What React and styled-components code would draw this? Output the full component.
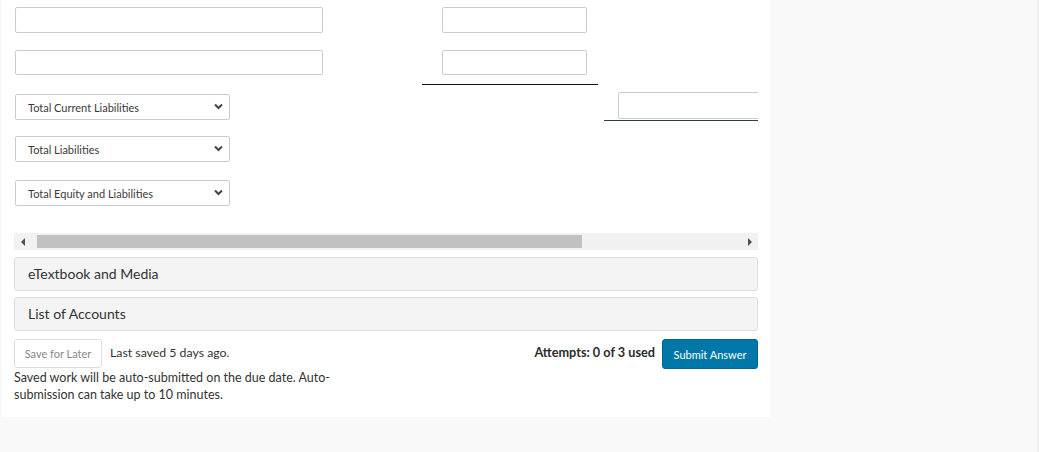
import React from "react";
import styled, { createGlobalStyle } from "styled-components";

const Global = createGlobalStyle`
  html, body { margin: 0; padding: 0; background: #f9f9f9; }
  body { font-family: Lato, "Open Sans", Arial, sans-serif; color: #333; }
  * { box-sizing: border-box; }
`;

const Page = styled.div`
  display: flex;
  width: 1039px;
  height: 452px;
  overflow: hidden;
`;

const Panel = styled.main`
  margin-left: 2px;
  width: 768px;
  height: 417px;
  background: #fff;
  padding: 0 12px 0 12px;
`;

const Spacer = styled.div`
  flex: 1;
`;

const EdgeStrip = styled.div`
  width: 2px;
  background: #efefef;
`;

const Clip = styled.div`
  width: 744px;
  overflow: hidden;
`;

const Row = styled.div`
  display: grid;
  grid-template-columns: 408px 182px 190px;
  height: ${(p) => p.$h}px;
  width: 780px;
`;

const Cell = styled.div`
  padding-top: ${(p) => p.$top || 0}px;
  padding-left: ${(p) => p.$left || 0}px;
`;

const RuledCell = styled.div`
  padding-top: ${(p) => p.$top || 0}px;
  padding-left: ${(p) => p.$left || 0}px;
  border-bottom: 1px solid ${(p) => p.$line};
  width: ${(p) => p.$w}px;
  height: ${(p) => p.$hh}px;
`;

const TextInput = styled.input`
  display: block;
  margin: 0 0 0 1px;
  width: ${(p) => p.$w}px;
  height: ${(p) => p.$h || 26}px;
  border: 1px solid #cccccc;
  border-radius: 2px;
  background: #fff;
  padding: 0 6px;
  font: 12px Lato, sans-serif;
  outline: none;
`;

const SelectWrap = styled.div`
  position: relative;
  margin-left: 1px;
  width: 215px;
  height: 26px;
`;

const Select = styled.select`
  appearance: none;
  -webkit-appearance: none;
  width: 100%;
  height: 100%;
  border: 1px solid #cccccc;
  border-radius: 2px;
  background: #fff;
  padding: 0 24px 0 12px;
  font: 11px Lato, sans-serif;
  color: #3a3a3a;
  outline: none;
`;

const Chevron = styled.svg`
  position: absolute;
  right: 7px;
  top: 9px;
  pointer-events: none;
`;

const Scrollbar = styled.div`
  display: flex;
  align-items: center;
  margin-top: 16px;
  width: 744px;
  height: 17px;
  background: #f1f1f1;
`;

const ArrowBox = styled.div`
  width: 17px;
  height: 17px;
  display: flex;
  align-items: center;
  justify-content: center;
  flex: none;
`;

const Triangle = styled.div`
  width: 0;
  height: 0;
  border-top: 4px solid transparent;
  border-bottom: 4px solid transparent;
  ${(p) =>
    p.$dir === "left"
      ? "border-right: 4px solid #505050;"
      : "border-left: 4px solid #505050;"}
`;

const Thumb = styled.div`
  margin-left: 6px;
  width: 545px;
  height: 13px;
  background: #c1c1c1;
`;

const TrackFill = styled.div`
  flex: 1;
`;

const Accordions = styled.div`
  display: flex;
  flex-direction: column;
  gap: 6px;
  margin-top: 7px;
`;

const AccordionHead = styled.div`
  height: 34px;
  display: flex;
  align-items: center;
  padding-left: 13px;
  padding-bottom: 1px;
  background: #f4f4f4;
  border: 1px solid #dedede;
  border-radius: 3px;
  font-size: 14px;
  color: #333;
`;

const Footer = styled.div`
  display: flex;
  justify-content: space-between;
  margin-top: 8px;
`;

const FooterLeft = styled.div`
  width: 326px;
`;

const SaveLine = styled.div`
  display: flex;
  align-items: center;
  gap: 8px;
`;

const GhostButton = styled.button`
  width: 88px;
  height: 29px;
  border: 1px solid #dddddd;
  border-radius: 3px;
  background: #fff;
  color: #888;
  font: 11px Lato, sans-serif;
  padding: 0;
  cursor: pointer;
`;

const Muted = styled.span`
  font-size: 12.3px;
  color: #333;
  margin-top: -3px;
`;

const Note = styled.p`
  margin: 1px 0 0;
  font-size: 12.5px;
  line-height: 17px;
  color: #333;
`;

const FooterRight = styled.div`
  display: flex;
  align-items: flex-start;
  gap: 7px;
`;

const Attempts = styled.span`
  font-size: 12.7px;
  font-weight: 700;
  color: #2b2b2b;
  margin-top: 5px;
`;

const PrimaryButton = styled.button`
  width: 96px;
  height: 30px;
  border: 1px solid #006690;
  border-radius: 3px;
  background: #0077a9;
  color: #fff;
  font: 11px Lato, sans-serif;
  padding: 0;
  cursor: pointer;
`;

const DropDown = ({ label }) => (
  <SelectWrap>
    <Select defaultValue={label}>
      <option>{label}</option>
    </Select>
    <Chevron width="9" height="7" viewBox="0 0 9 7">
      <path d="M1 1.5 L4.5 5 L8 1.5" fill="none" stroke="#444" strokeWidth="2" />
    </Chevron>
  </SelectWrap>
);

export default function App() {
  return (
    <Page>
      <Global />
      <Panel>
        <Clip>
          <Row $h={43}>
            <Cell $top={7}>
              <TextInput $w={308} />
            </Cell>
            <Cell $top={7} $left={19}>
              <TextInput $w={145} />
            </Cell>
            <Cell />
          </Row>
          <Row $h={42}>
            <Cell $top={7}>
              <TextInput $w={308} $h={25} />
            </Cell>
            <RuledCell $top={7} $left={19} $line="#111" $w={176} $hh={42}>
              <TextInput $w={145} $h={25} />
            </RuledCell>
            <Cell />
          </Row>
          <Row $h={44}>
            <Cell $top={9}>
              <DropDown label="Total Current Liabilities" />
            </Cell>
            <Cell />
            <RuledCell $top={7} $left={13} $line="#2c3e50" $w={190} $hh={36}>
              <TextInput $w={160} $h={27} />
            </RuledCell>
          </Row>
          <Row $h={44}>
            <Cell $top={7}>
              <DropDown label="Total Liabilities" />
            </Cell>
            <Cell />
            <Cell />
          </Row>
          <Row $h={44}>
            <Cell $top={7}>
              <DropDown label="Total Equity and Liabilities" />
            </Cell>
            <Cell />
            <Cell />
          </Row>
        </Clip>
        <Scrollbar>
          <ArrowBox>
            <Triangle $dir="left" />
          </ArrowBox>
          <Thumb />
          <TrackFill />
          <ArrowBox>
            <Triangle $dir="right" />
          </ArrowBox>
        </Scrollbar>
        <Accordions>
          <AccordionHead>eTextbook and Media</AccordionHead>
          <AccordionHead>List of Accounts</AccordionHead>
        </Accordions>
        <Footer>
          <FooterLeft>
            <SaveLine>
              <GhostButton>Save for Later</GhostButton>
              <Muted>Last saved 5 days ago.</Muted>
            </SaveLine>
            <Note>
              Saved work will be auto-submitted on the due date. Auto-submission can take up to 10 minutes.
            </Note>
          </FooterLeft>
          <FooterRight>
            <Attempts>Attempts: 0 of 3 used</Attempts>
            <PrimaryButton>Submit Answer</PrimaryButton>
          </FooterRight>
        </Footer>
      </Panel>
      <Spacer />
      <EdgeStrip />
    </Page>
  );
}
